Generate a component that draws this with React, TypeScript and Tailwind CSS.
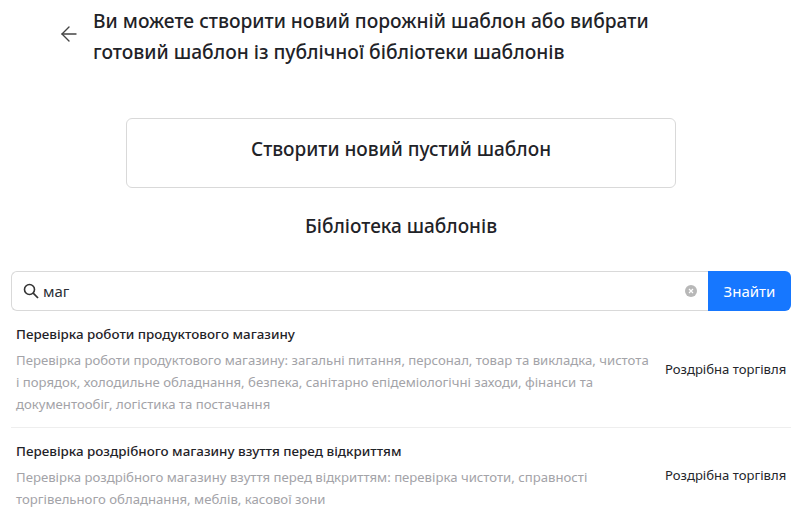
import { ArrowLeft } from "lucide-react";

function Row({ title, desc, border }: { title: string; desc: React.ReactNode; border?: boolean }) {
  return (
    <div className={`flex items-center pl-[5px] pr-[5px] pt-[13px] pb-[12px] ${border ? "border-b border-[#eeeeee]" : ""}`}>
      <div className="w-[649px] shrink-0">
        <div className="text-[13.4px] leading-[20px] font-medium text-[#1f2328] whitespace-nowrap">{title}</div>
        <div className="mt-[5px] text-[13.17px] leading-[22px] text-[#a3a3a8] whitespace-nowrap">{desc}</div>
      </div>
      <div className="ml-auto mb-[2px] text-[13.1px] leading-[20px] text-[#24262b] whitespace-nowrap">Роздрібна торгівля</div>
    </div>
  );
}

export default function App() {
  return (
    <div className="w-[809px] h-[522px] overflow-hidden bg-white font-['Noto_Sans',sans-serif]">
      <div className="flex items-start pl-[57px] pt-[5px]">
        <ArrowLeft className="mt-[17px] w-[24px] h-[24px] text-[#444444] shrink-0" strokeWidth={1.4} />
        <div className="ml-[12px] text-[19.2px] leading-[31px] font-medium text-[#1f2328] whitespace-nowrap">
          <div>Ви можете створити новий порожній шаблон або вибрати</div>
          <div>готовий шаблон із публічної бібліотеки шаблонів</div>
        </div>
      </div>
      <div className="mt-[51px] ml-[126px] w-[550px] h-[70px] pb-[7px] border border-[#d9d9d9] rounded-md flex items-center justify-center text-[19px] font-medium text-[#1f2328]">
        Створити новий пустий шаблон
      </div>
      <div className="mt-[25px] w-[802px] text-center text-[19px] leading-[26px] font-medium text-[#1f2328]">Бібліотека шаблонів</div>
      <div className="mt-[32px] ml-[11px] w-[780px] flex h-[40px]">
        <div className="flex-1 flex items-center border border-r-0 border-[#d9d9d9] rounded-l-md pl-[11px] pr-[11px]">
          <svg width="16" height="16" viewBox="0 0 16 16" fill="none" className="shrink-0">
            <circle cx="6.5" cy="6.5" r="5" stroke="#333333" strokeWidth="1.6" />
            <path d="M10.2 10.2L15 15" stroke="#333333" strokeWidth="1.7" />
          </svg>
          <span className="ml-[4px] text-[15px] text-[#2b2f36]">маг</span>
          <span className="ml-auto w-[12px] h-[12px] rounded-full bg-[#b8b8b8] flex items-center justify-center">
            <svg width="6" height="6" viewBox="0 0 6 6"><path d="M1 1l4 4M5 1l-4 4" stroke="#fff" strokeWidth="1.2" /></svg>
          </span>
        </div>
        <div className="w-[83px] bg-[#1677ff] text-white text-[15px] rounded-r-md flex items-center justify-center">Знайти</div>
      </div>
      <div className="ml-[11px] w-[780px]">
        <Row
          border
          title="Перевірка роботи продуктового магазину"
          desc={<>Перевірка роботи продуктового магазину: загальні питання, персонал, товар та викладка, чистота<br />і порядок, холодильне обладнання, безпека, санітарно епідеміологічні заходи, фінанси та<br />документообіг, логістика та постачання</>}
        />
        <Row
          title="Перевірка роздрібного магазину взуття перед відкриттям"
          desc={<>Перевірка роздрібного магазину взуття перед відкриттям: перевірка чистоти, справності<br />торгівельного обладнання, меблів, касової зони</>}
        />
      </div>
    </div>
  );
}
